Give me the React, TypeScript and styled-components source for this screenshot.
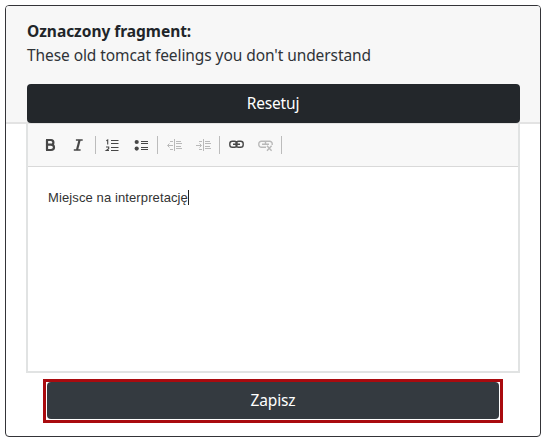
import React from "react";
import styled, { createGlobalStyle } from "styled-components";

const GlobalStyle = createGlobalStyle`
  * { box-sizing: border-box; }
  body { margin: 0; background: #fff; overflow: hidden; }
`;

const Card = styled.main`
  width: 536px;
  height: 432px;
  margin: 5px 0 0 5px;
  border: 1px solid #343438;
  border-radius: 4px;
  background: #fff;
  overflow: hidden;
  display: flex;
  flex-direction: column;
  font-family: "Noto Sans", sans-serif;
  color: #212529;
`;

const Header = styled.header`
  height: 118px;
  padding: 13px 20.5px 0;
  background: #f7f7f7;
  border-bottom: 2px solid #e3e3e3;
  display: flex;
  flex-direction: column;
`;

const Title = styled.strong`
  padding-left: 0.5px;
  font-size: 15.5px;
  line-height: 24px;
  letter-spacing: -0.03px;
  white-space: nowrap;
`;

const Fragment = styled.span`
  padding-left: 0.5px;
  font-size: 15.5px;
  line-height: 24px;
  letter-spacing: -0.08px;
  white-space: nowrap;
  color: #2f3337;
`;

const Button = styled.button<{ $tone: string; $height: number }>`
  display: block;
  width: 100%;
  height: ${(p) => p.$height}px;
  flex: none;
  padding: 0;
  border: 0;
  border-radius: 4px;
  background: ${(p) => p.$tone};
  color: #fff;
  font: 15.5px "Noto Sans", sans-serif;
  letter-spacing: -0.15px;
  line-height: ${(p) => p.$height}px;
`;

const ResetRow = styled.div`
  margin-top: 17px;
  position: relative;
  z-index: 1;
`;

const Editor = styled.section`
  width: 494px;
  height: 249px;
  margin-left: 20px;
  border: 2px solid #e1e3e3;
  border-top: 0;
  display: flex;
  flex-direction: column;
`;

const Toolbar = styled.div`
  height: 43px;
  padding: 1px 0 0 8px;
  background: #f8f8f8;
  border-bottom: 1px solid #d9d9d9;
  display: flex;
`;

const Tool = styled.span<{ $disabled?: boolean }>`
  width: 29px;
  height: 40px;
  display: flex;
  align-items: center;
  justify-content: center;
  color: ${(p) => (p.$disabled ? "#b9b9b9" : "#474747")};
`;

const Separator = styled.i`
  width: 1px;
  height: 18px;
  margin: 11px 2px 0 1px;
  background: #bcbcbc;
`;

const Content = styled.div`
  flex: 1;
  padding: 21px 20px;
  display: flex;
  align-items: flex-start;
  color: #333;
  font: 13px/20px "Liberation Sans", Arial, sans-serif;
  letter-spacing: 0.11px;
`;

const Caret = styled.i`
  width: 1px;
  height: 15px;
  margin-top: 2px;
  background: #222;
`;

const Highlight = styled.div`
  width: 460px;
  height: 44px;
  margin: 6px 0 0 37px;
  border: 3px solid #a90b0f;
  padding: 0 1px 1px;
`;

const Icon = ({ children }: { children: React.ReactNode }) => (
  <svg width="17" height="16" viewBox="0 0 17 16" fill="none" stroke="currentColor">
    {children}
  </svg>
);

const BoldIcon = () => (
  <Icon>
    <path d="M5 3v10M4 3h5q2.400.2 2.400 2.400Q11.400 7.700 9 7.700H5M9 7.700q3 .2 3 2.600 0 2.700-3 2.700H4" strokeWidth="2.200" />
  </Icon>
);

const ItalicIcon = () => (
  <Icon>
    <path d="M4.900 3h6.800M2.800 13h6.800" strokeWidth="1.700" />
    <path d="M8.600 3 6 13" strokeWidth="2.200" />
  </Icon>
);

const NumberedIcon = () => (
  <Icon>
    <path d="M7 3.500h7.500M7 6.500h7.500M7 10.500h7.500M7 13.500h7.500" strokeWidth="1" />
    <path d="M2.300 3.700 3.700 3v4.500M2 10h2.700v1.700L2.300 13.500H5" strokeWidth="1.100" />
  </Icon>
);

const BulletIcon = () => (
  <Icon>
    <path d="M8 4.500h7M8 6.500h7M8 10.500h7M8 12.500h7" strokeWidth="1" />
    <circle cx="3.700" cy="5" r="2.100" fill="currentColor" stroke="none" />
    <circle cx="3.700" cy="11.600" r="2.100" fill="currentColor" stroke="none" />
  </Icon>
);

const IndentIcon = ({ inward }: { inward?: boolean }) => (
  <Icon>
    <path d="M8.500 2v12" />
    <path d="M10 4.500h5M10 6.500h6M10 9.500h5M10 11.500h6M4 4.500h3M4 12.500h3" strokeWidth="1" />
    <path d={inward ? "M1 8.500h5M4.500 6.500l2 2-2 2" : "M2 8.500h5M3.500 6.500l-2 2 2 2"} />
  </Icon>
);

const LinkIcon = () => (
  <Icon>
    <rect x="1.800" y="4.200" width="7.200" height="6.100" rx="2.600" strokeWidth="1.400" />
    <rect x="8" y="4.200" width="7.200" height="6.100" rx="2.600" strokeWidth="1.400" />
    <path d="M5 7.250h7" strokeWidth="1.600" />
  </Icon>
);

const UnlinkIcon = () => (
  <Icon>
    <path d="M9 10.300H4.400A2.600 2.600 0 0 1 1.800 7.700V6.800A2.600 2.600 0 0 1 4.400 4.200H12.600A2.600 2.600 0 0 1 15.200 6.800V8M5 7.250h7M8.500 4v2.500" strokeWidth="1.400" />
    <path d="M10 8.800l4.600 5M14.600 8.800l-4.600 5" strokeWidth="1.400" />
  </Icon>
);

export default function App() {
  return (
    <>
      <GlobalStyle />
      <Card>
        <Header>
          <Title>Oznaczony fragment:</Title>
          <Fragment>These old tomcat feelings you don't understand</Fragment>
          <ResetRow>
            <Button $tone="#23272b" $height={39}>Resetuj</Button>
          </ResetRow>
        </Header>
        <Editor>
          <Toolbar>
            <Tool><BoldIcon /></Tool>
            <Tool><ItalicIcon /></Tool>
            <Separator />
            <Tool><NumberedIcon /></Tool>
            <Tool><BulletIcon /></Tool>
            <Separator />
            <Tool $disabled><IndentIcon /></Tool>
            <Tool $disabled><IndentIcon inward /></Tool>
            <Separator />
            <Tool><LinkIcon /></Tool>
            <Tool $disabled><UnlinkIcon /></Tool>
            <Separator />
          </Toolbar>
          <Content>
            <span>Miejsce na interpretację</span>
            <Caret />
          </Content>
        </Editor>
        <Highlight>
          <Button $tone="#343a40" $height={37}>Zapisz</Button>
        </Highlight>
      </Card>
    </>
  );
}
